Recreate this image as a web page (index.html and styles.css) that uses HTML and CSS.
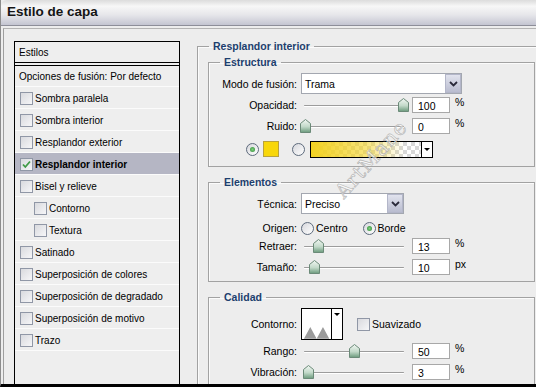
FILE: index.html
```html
<!DOCTYPE html>
<html lang="es">
<head>
  <meta charset="UTF-8">
  <title>Estilo de capa</title>
  <link rel="stylesheet" href="styles.css">
</head>
<body>
<svg class="defs" width="0" height="0">
  <defs>
    <linearGradient id="thumbFill" x1="0" y1="0" x2="0" y2="1">
      <stop offset="0" stop-color="#f2f7f3"/>
      <stop offset="0.55" stop-color="#c2d9c9"/>
      <stop offset="1" stop-color="#6b9a7c"/>
    </linearGradient>
    <symbol id="thumb" viewBox="0 0 11 14">
      <path d="M0.5 4.5 L5.5 0.5 L10.5 4.5 V13.5 H0.5 Z" fill="url(#thumbFill)" stroke="#6b8a78"/>
    </symbol>
  </defs>
</svg>

<div class="window">
  <div class="titlebar">Estilo de capa</div>

  <div class="content">
    <!-- Lista de estilos -->
    <div class="styles">
      <div class="styles-head">Estilos</div>
      <div class="styles-item">Opciones de fusión: Por defecto</div>
      <div class="styles-item"><span class="chk"></span>Sombra paralela</div>
      <div class="styles-item"><span class="chk"></span>Sombra interior</div>
      <div class="styles-item"><span class="chk"></span>Resplandor exterior</div>
      <div class="styles-item selected">
        <span class="chk"><svg width="11" height="11" viewBox="0 0 11 11"><path d="M2 5.5 L4.3 8 L9 2.5" fill="none" stroke="#3f9a46" stroke-width="1.8"/></svg></span>Resplandor interior
      </div>
      <div class="styles-item"><span class="chk"></span>Bisel y relieve</div>
      <div class="styles-item sub"><span class="chk"></span>Contorno</div>
      <div class="styles-item sub"><span class="chk"></span>Textura</div>
      <div class="styles-item"><span class="chk"></span>Satinado</div>
      <div class="styles-item"><span class="chk"></span>Superposición de colores</div>
      <div class="styles-item"><span class="chk"></span>Superposición de degradado</div>
      <div class="styles-item"><span class="chk"></span>Superposición de motivo</div>
      <div class="styles-item"><span class="chk"></span>Trazo</div>
    </div>

    <!-- Panel de opciones -->
    <div class="panel">
      <fieldset class="group main">
        <legend>Resplandor interior</legend>

        <fieldset class="group">
          <legend>Estructura</legend>
          <div class="row">
            <span class="lbl">Modo de fusión:</span>
            <div class="select select-wide"><span class="select-val">Trama</span><span class="select-btn"><svg width="9" height="6" viewBox="0 0 9 6"><path d="M1 1 L4.5 4.5 L8 1" fill="none" stroke="#2a2a3a" stroke-width="1.8"/></svg></span></div>
          </div>
          <div class="row">
            <span class="lbl">Opacidad:</span>
            <div class="slider"><svg class="thumb" style="left: 97px"><use href="#thumb"/></svg></div>
            <span class="num">100</span><span class="unit">%</span>
          </div>
          <div class="row">
            <span class="lbl">Ruido:</span>
            <div class="slider"><svg class="thumb" style="left: -1px"><use href="#thumb"/></svg></div>
            <span class="num">0</span><span class="unit">%</span>
          </div>
          <div class="row row-colors">
            <span class="radio on"></span>
            <span class="swatch"></span>
            <span class="radio"></span>
            <span class="gradient"><span class="gradient-fill"></span><span class="gradient-btn"></span></span>
          </div>
        </fieldset>

        <fieldset class="group">
          <legend>Elementos</legend>
          <div class="row">
            <span class="lbl">Técnica:</span>
            <div class="select select-short"><span class="select-val">Preciso</span><span class="select-btn"><svg width="9" height="6" viewBox="0 0 9 6"><path d="M1 1 L4.5 4.5 L8 1" fill="none" stroke="#2a2a3a" stroke-width="1.8"/></svg></span></div>
          </div>
          <div class="row row-radio">
            <span class="lbl">Origen:</span>
            <span class="radio"></span><span class="opt">Centro</span>
            <span class="radio on"></span><span class="opt">Borde</span>
          </div>
          <div class="row">
            <span class="lbl">Retraer:</span>
            <div class="slider"><svg class="thumb" style="left: 12px"><use href="#thumb"/></svg></div>
            <span class="num">13</span><span class="unit">%</span>
          </div>
          <div class="row">
            <span class="lbl">Tamaño:</span>
            <div class="slider"><svg class="thumb" style="left: 8px"><use href="#thumb"/></svg></div>
            <span class="num">10</span><span class="unit">px</span>
          </div>
        </fieldset>

        <fieldset class="group">
          <legend>Calidad</legend>
          <div class="row row-contour">
            <span class="lbl">Contorno:</span>
            <span class="contour">
              <svg class="contour-pic" width="30" height="30" viewBox="0 0 30 30"><path d="M2 30 L8.5 18 L15 30 L21.5 18 L28 30 Z" fill="#9b9b9b"/></svg>
              <span class="contour-btn"></span>
            </span>
            <span class="chk"></span><span class="opt">Suavizado</span>
          </div>
          <div class="row">
            <span class="lbl">Rango:</span>
            <div class="slider"><svg class="thumb" style="left: 48px"><use href="#thumb"/></svg></div>
            <span class="num">50</span><span class="unit">%</span>
          </div>
          <div class="row">
            <span class="lbl">Vibración:</span>
            <div class="slider"><svg class="thumb" style="left: 2px"><use href="#thumb"/></svg></div>
            <span class="num">3</span><span class="unit">%</span>
          </div>
        </fieldset>
      </fieldset>
    </div>
  </div>

  <div class="watermark">ArtMane</div>
</div>
</body>
</html>
```

FILE: styles.css
```css
/* Base */
* {
  box-sizing: border-box;
}
body {
  margin: 0;
  font-family: "Liberation Sans", Arial, sans-serif;
  font-size: 10.5px;
  color: #000;
  background: #000;
}
.defs {
  position: absolute;
}

.window {
  position: relative;
  width: 536px;
  height: 387px;
  overflow: hidden;
  background: #ededed;
  border-left: 1px solid #8c8c8c;
  border-bottom: 3px solid #000;
}

/* Barre de titre */
.titlebar {
  height: 26px;
  padding: 4px 0 0 6px;
  font-size: 13.5px;
  font-weight: bold;
  color: #151515;
  background: linear-gradient(#dcdcdc, #f7f7f7 25%, #e6e6ea 60%, #c4c5d1);
  border-bottom: 1px solid #8d8e99;
  border-top-left-radius: 6px;
}

.content {
  display: flex;
  height: 400px;
  margin: 2px 0 0 2px;
  padding: 10px 0 0 10px;
  border-left: 1px solid #9e9e9e;
  border-top: 1px solid #b4b4b4;
}

/* Liste des styles */
.styles {
  flex: none;
  width: 166px;
  margin-top: 2px;
  border: 1px solid #000;
  background: #eeeeee;
  font-size: 10px;
}

.styles-head {
  height: 21px;
  padding: 5px 0 0 4px;
  border-bottom: 1px solid #000;
  margin-bottom: 2px;
}

.styles-item {
  display: flex;
  align-items: center;
  height: 22px;
  padding: 1px 0 0 4px;
  border-top: 1px solid #000;
  border-bottom: 1px solid #fbfbfb;
}
.styles-item + .styles-item {
  border-top: none;
}
.styles-item .chk {
  margin: 0 2px 0 1px;
}
.styles-item.sub {
  padding-left: 18px;
}
.styles-item.selected {
  background: #b5b6c4;
  font-weight: bold;
}

.chk {
  flex: none;
  display: inline-flex;
  align-items: center;
  justify-content: center;
  width: 13px;
  height: 13px;
  border: 1px solid #9097a6;
  background: linear-gradient(135deg, #d9dade, #f6f6f8);
}

/* Panneau de droite */
.panel {
  flex: none;
  width: 360px;
  margin-left: 17px;
}

.group {
  margin: 0;
  padding: 4px 0 4px 10px;
  min-width: 0;
  border: 1px solid #a2a2a2;
  box-shadow: inset 1px 1px 0 #fbfbfb;
}
.group legend {
  margin-left: 11px;
  padding: 0 4px;
  line-height: 14px;
  font-weight: bold;
  color: #1d3f6e;
}

.group.main {
  padding: 0 0 0 10px;
}
.group.main > legend {
  margin-left: 1px;
}
.group.main > .group {
  width: 327px;
  margin-top: 8px;
  padding-left: 0;
}
.group.main > .group:first-of-type {
  margin-top: 2px;
}

.row {
  display: flex;
  align-items: center;
  height: 21px;
}
.lbl {
  flex: none;
  width: 88px;
  margin-right: 4px;
  text-align: right;
}

/* Listes déroulantes */
.select {
  display: flex;
  height: 21px;
  border: 1px solid #a3a7b0;
  background: #fff;
}
.select-wide {
  width: 161px;
}
.select-short {
  width: 103px;
}
.select-val {
  flex: 1;
  padding: 4px 0 0 3px;
}
.select-btn {
  display: flex;
  align-items: center;
  justify-content: center;
  width: 16px;
  border: 1px solid #b3b6c9;
  background: linear-gradient(#e1e3ee, #b9bccf);
}

/* Curseurs */
.slider {
  position: relative;
  flex: none;
  width: 106px;
  height: 15px;
  margin-right: 5px;
}
.slider::before {
  content: "";
  position: absolute;
  left: 3px;
  right: 3px;
  top: 8px;
  height: 1px;
  background: #9c9c9c;
  border-radius: 1px;
  box-shadow: 0 1px 0 #fff;
}
.thumb {
  position: absolute;
  top: 1px;
  width: 11px;
  height: 14px;
}

.num {
  width: 38px;
  height: 16px;
  padding: 2px 0 0 5px;
  border: 1px solid #a8a8a8;
  background: #fff;
}
.unit {
  margin-left: 5px;
  align-self: flex-start;
  padding-top: 2px;
}

/* Boutons radio */
.radio {
  flex: none;
  display: inline-flex;
  align-items: center;
  justify-content: center;
  width: 13px;
  height: 13px;
  border: 1px solid #5d6a7c;
  border-radius: 50%;
  background: linear-gradient(135deg, #d6d7dc, #fff);
}
.radio.on::after {
  content: "";
  width: 5px;
  height: 5px;
  border-radius: 50%;
  background: radial-gradient(#7ed07e, #2f8a35);
}

.row-colors {
  height: 26px;
  padding-left: 37px;
}
.swatch {
  width: 16px;
  height: 16px;
  margin: 0 13px 0 4px;
  border: 1px solid #b9a23c;
  background: #f8d70a;
}
.gradient {
  display: flex;
  width: 123px;
  height: 17px;
  margin-left: 5px;
  border: 1px solid #000;
  background-color: #fff;
  background-image: linear-gradient(45deg, #d8d8d8 25%, transparent 25%, transparent 75%, #d8d8d8 75%),
    linear-gradient(45deg, #d8d8d8 25%, transparent 25%, transparent 75%, #d8d8d8 75%);
  background-size: 8px 8px;
  background-position: 0 0, 4px 4px;
}
.gradient-fill {
  flex: 1;
  background: linear-gradient(to right, #f3d222, rgba(243, 210, 34, 0.6) 50%, rgba(243, 210, 34, 0) 85%);
}
.gradient-btn,
.contour-btn {
  position: relative;
  width: 11px;
  border-left: 1px solid #000;
  background: #fff;
}
.gradient-btn::after,
.contour-btn::after {
  content: "";
  position: absolute;
  left: 2px;
  top: 6px;
  border: 3px solid transparent;
  border-top: 3px solid #000;
}
.contour-btn::after {
  top: 4px;
}

.row-radio {
  padding-top: 7px;
}
.opt {
  margin: 0 15px 0 2px;
}

.row-contour {
  height: 32px;
}
.contour {
  display: flex;
  width: 42px;
  height: 32px;
  margin-right: 14px;
  border: 1px solid #000;
  background: #fff;
}
.contour-pic {
  align-self: flex-end;
}

/* Filigrane */
.watermark {
  position: absolute;
  left: 322px;
  top: 147px;
  transform: rotate(-48deg);
  font-family: "DejaVu Serif", serif;
  font-size: 20px;
  color: rgba(255, 255, 255, 0.6);
  -webkit-text-stroke: 0.6px #b0b0b0;
  letter-spacing: 1px;
}
```
